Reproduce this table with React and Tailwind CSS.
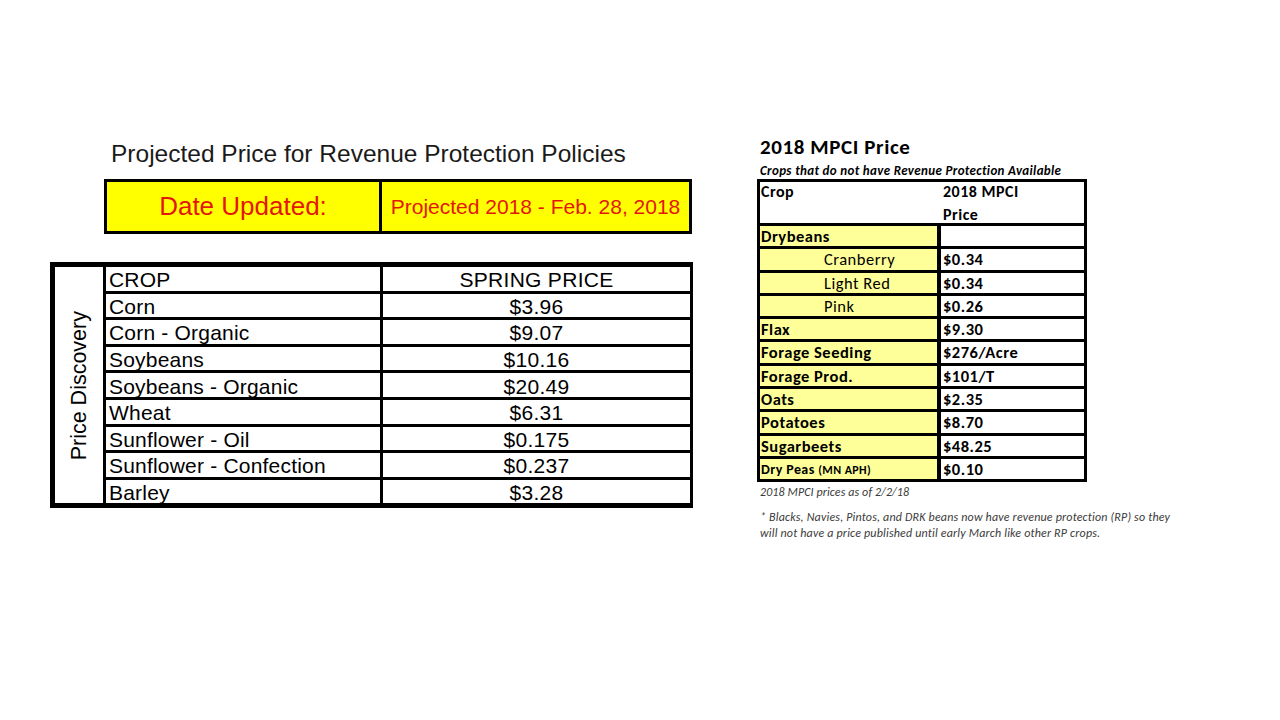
import React from "react";

const crops = [
  ["Corn", "$3.96"],
  ["Corn - Organic", "$9.07"],
  ["Soybeans", "$10.16"],
  ["Soybeans - Organic", "$20.49"],
  ["Wheat", "$6.31"],
  ["Sunflower - Oil", "$0.175"],
  ["Sunflower - Confection", "$0.237"],
  ["Barley", "$3.28"],
];

const mpci = [
  { name: "Cranberry", price: "$0.34", sub: true },
  { name: "Light Red", price: "$0.34", sub: true },
  { name: "Pink", price: "$0.26", sub: true },
  { name: "Flax", price: "$9.30" },
  { name: "Forage Seeding", price: "$276/Acre" },
  { name: "Forage Prod.", price: "$101/T" },
  { name: "Oats", price: "$2.35" },
  { name: "Potatoes", price: "$8.70" },
  { name: "Sugarbeets", price: "$48.25" },
];

const App = () => {
  return (
    <div className="w-[1280px] h-[720px] bg-white overflow-hidden flex pt-[134px]">
      {/* Left: projected prices */}
      <div className="ml-[50px] w-[643px] pt-[5px] font-['Liberation_Sans',Arial,sans-serif]">
        <div className="ml-[61px] h-[30px] leading-[30px] text-[24.5px] text-[#1a1a1a] whitespace-nowrap">
          Projected Price for Revenue Protection Policies
        </div>

        <div className="mt-[10px] ml-[54px] w-[588px] h-[55px] border-[3px] border-black bg-[#ffff00] flex text-[#e3170a]">
          <div className="w-[275px] border-r-[3px] border-black flex items-center justify-center text-[26px]">
            Date Updated:
          </div>
          <div className="flex-1 flex items-center justify-center text-[21px] whitespace-nowrap">
            Projected 2018 - Feb. 28, 2018
          </div>
        </div>

        <div className="mt-[28px] w-[643px] border-l-[5px] border-t-[5px] border-b-[5px] border-r-[3px] border-black flex text-black">
          <div className="w-[51px] border-r-[3px] border-black flex items-center justify-center">
            <span className="[writing-mode:vertical-rl] rotate-180 text-[21.5px] whitespace-nowrap">Price Discovery</span>
          </div>
          <div className="flex-1 flex flex-col">
            {[["CROP", "SPRING PRICE"], ...crops].map(([name, price], i) => (
              <div
                key={name}
                className={`h-[23.6px] flex text-[21px] leading-none ${i < 8 ? "box-content border-b-[3px] border-black" : ""}`}
              >
                <div className="w-[277px] border-r-[3px] border-black pl-[3px] pt-[2px] flex items-center whitespace-nowrap tracking-[0.2px]">
                  {name}
                </div>
                <div className="flex-1 pt-[2px] flex items-center justify-center tracking-[0.3px]">{price}</div>
              </div>
            ))}
          </div>
        </div>
      </div>

      {/* Right: MPCI prices */}
      <div className="ml-[64px] w-[440px] font-['Carlito','Lato',sans-serif] text-black">
        <div className="ml-[3px] h-[28px] leading-[26px] text-[21px] tracking-[0.6px] font-bold">2018 MPCI Price</div>
        <div className="ml-[3px] h-[17px] leading-[17px] text-[13px] tracking-[0.35px] font-bold italic whitespace-nowrap">
          Crops that do not have Revenue Protection Available
        </div>

        <div className="w-[330px] border-[3px] border-black">
          <div className="h-[41px] box-content border-b-[3px] border-black flex text-[16px] tracking-[0.5px] font-bold leading-[23px]">
            <div className="w-[181px] pl-[1px] -mt-[2px]">Crop</div>
            <div className="pl-[2px] -mt-[2px]">
              2018 MPCI
              <br />
              Price
            </div>
          </div>

          <div className="h-[20.3px] box-content border-b-[3px] border-black flex text-[16.5px] tracking-[0.5px] font-bold leading-[21px]">
            <div className="w-[181px] bg-[#ffff99] border-r-[4px] border-black pl-[1px]">Drybeans</div>
            <div className="flex-1 bg-white"></div>
          </div>

          {mpci.map((r) => (
            <div
              key={r.name}
              className="h-[20.3px] box-content border-b-[3px] border-black flex text-[16.5px] tracking-[0.5px] leading-[21px]"
            >
              <div
                className={`w-[181px] bg-[#ffff99] border-r-[4px] border-black whitespace-nowrap ${
                  r.sub ? "pl-[64px] font-normal" : "pl-[1px] font-bold"
                }`}
              >
                {r.name}
              </div>
              <div className="flex-1 bg-white pl-[2px] font-bold">{r.price}</div>
            </div>
          ))}

          <div className="h-[20.3px] flex leading-[21px] font-bold tracking-[0.4px]">
            <div className="w-[181px] bg-[#ffff99] border-r-[4px] border-black pl-[1px] whitespace-nowrap text-[14px]">
              Dry Peas <span className="text-[12px]">(MN APH)</span>
            </div>
            <div className="flex-1 bg-white pl-[2px] text-[16.5px] tracking-[0.5px]">$0.10</div>
          </div>
        </div>

        <div className="ml-[3px] mt-[2px] text-[12px] tracking-[0.1px] leading-[16px] italic text-[#3a3a3a]">
          2018 MPCI prices as of 2/2/18
        </div>
        <div className="ml-[3px] mt-[9px] text-[12px] tracking-[0.18px] leading-[16px] italic text-[#3a3a3a] whitespace-nowrap">
          * Blacks, Navies, Pintos, and DRK beans now have revenue protection (RP) so they
          <br />
          will not have a price published until early March like other RP crops.
        </div>
      </div>
    </div>
  );
};

export default App;
